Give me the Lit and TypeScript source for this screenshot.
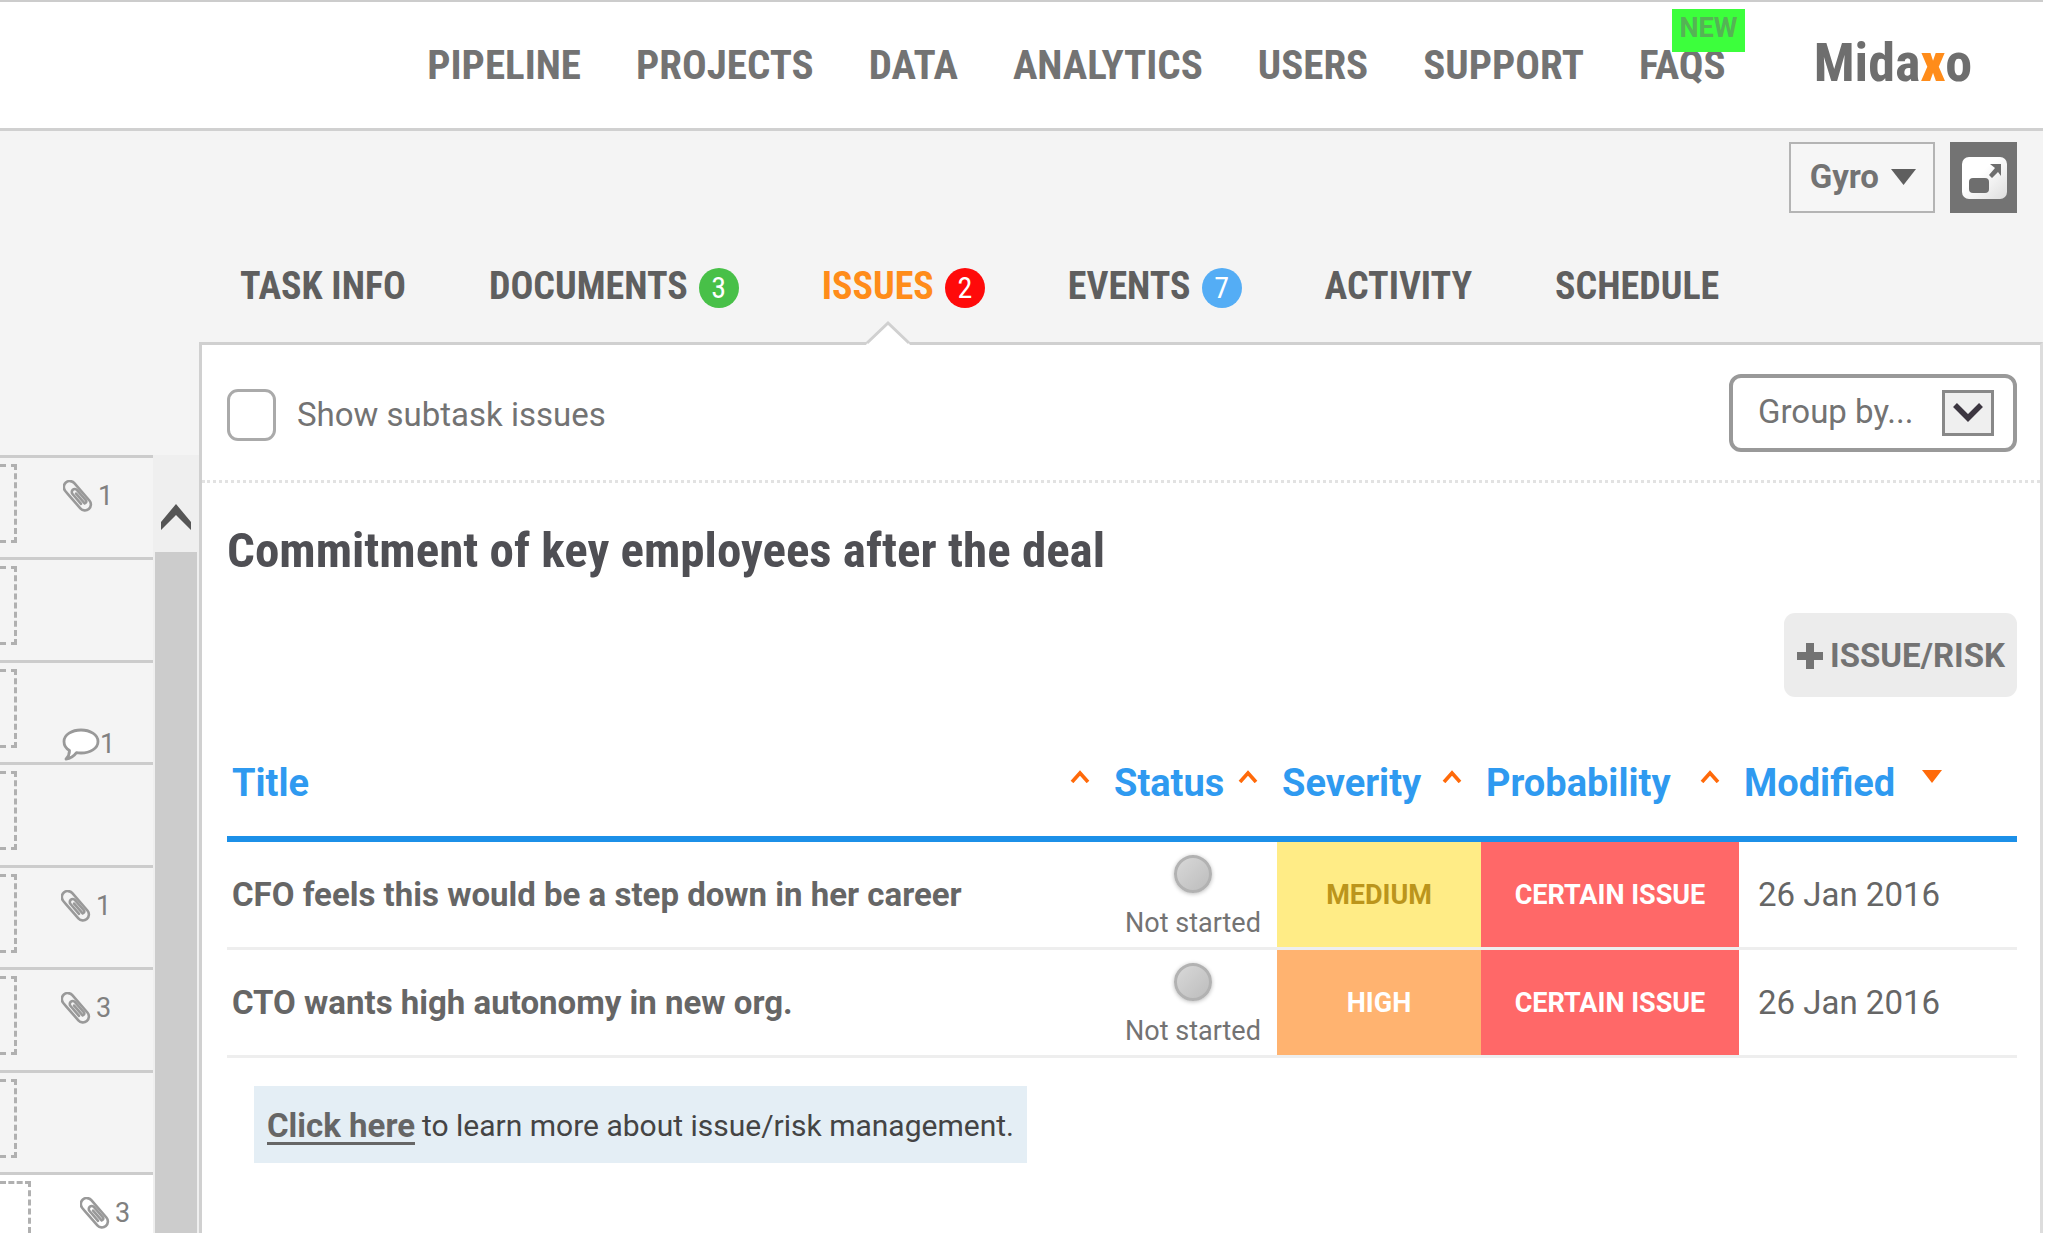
import { LitElement, html, css, nothing } from 'lit';
import { customElement } from 'lit/decorators.js';
import { classMap } from 'lit/directives/class-map.js';

interface Tab { label: string; count?: number; tone?: string; active?: boolean; }
interface TaskRow { icon?: 'clip' | 'comment'; count?: number; shift?: boolean; last?: boolean; }
interface Issue { title: string; status: string; severity: string; tone: string; probability: string; modified: string; }

const NAV = ['PIPELINE', 'PROJECTS', 'DATA', 'ANALYTICS', 'USERS', 'SUPPORT'];

const TABS: Tab[] = [
  { label: 'TASK INFO' },
  { label: 'DOCUMENTS', count: 3, tone: 'green' },
  { label: 'ISSUES', count: 2, tone: 'red', active: true },
  { label: 'EVENTS', count: 7, tone: 'blue' },
  { label: 'ACTIVITY' },
  { label: 'SCHEDULE' },
];

const TASKS: TaskRow[] = [
  { icon: 'clip', count: 1 },
  {},
  { icon: 'comment', count: 1 },
  {},
  { icon: 'clip', count: 1, shift: true },
  { icon: 'clip', count: 3, shift: true },
  {},
  { icon: 'clip', count: 3, last: true },
];

const ISSUES: Issue[] = [
  { title: 'CFO feels this would be a step down in her career', status: 'Not started', severity: 'MEDIUM', tone: 'medium', probability: 'CERTAIN ISSUE', modified: '26 Jan 2016' },
  { title: 'CTO wants high autonomy in new org.', status: 'Not started', severity: 'HIGH', tone: 'high', probability: 'CERTAIN ISSUE', modified: '26 Jan 2016' },
];

const clip = html`<svg class="clip" viewBox="0 0 30 33" aria-hidden="true">
  <g transform="rotate(-41 15 16.5)" fill="none" stroke="#999" stroke-width="2.6" stroke-linecap="round">
    <path d="M9 9V27a6 6 0 0 0 12 0V4a6 6 0 0 0 -12 0V9"/>
    <path d="M12.500 24V11a3 3 0 0 1 6 0V25a2 2 0 0 1 -3 1V13"/>
  </g></svg>`;

const comment = html`<svg class="comment" viewBox="0 0 38 34" aria-hidden="true">
  <path d="M19 2C28 2 36 6.500 36 13.500S28 25 19 25c-1.500 0-3 0-4.500-.4C12 28 8 30.500 4 31c2-2 3.500-5 3.500-8.500C4 20.500 2 17 2 13.500 2 6.500 10 2 19 2z"
    fill="#fff" stroke="#999" stroke-width="2.800" stroke-linejoin="round"/></svg>`;

const caret = html`<svg class="caret" viewBox="0 0 20 13" aria-hidden="true">
  <path d="M2 12L10 3L18 12" fill="none" stroke="#ff6a0a" stroke-width="3.600"/></svg>`;

const sorted = html`<svg class="caret" viewBox="0 0 20 13" aria-hidden="true">
  <path d="M0 0H20L10 13z" fill="#ff6a0a"/></svg>`;

@customElement('app-root')
export class AppRoot extends LitElement {
  static styles = css`
    :host {
      display: flex; flex-direction: column; min-height: 100vh; box-sizing: border-box;
      padding-right: 5px; background: #fff; color: #666;
      font: 400 33px/40px Roboto, "Liberation Sans", sans-serif;
    }
    * { box-sizing: border-box; }
    a { color: inherit; text-decoration: none; }
    button, select { font: inherit; color: inherit; margin: 0; cursor: pointer; }
    svg { display: block; flex: none; }
    .cond { font-family: "Roboto Condensed", Roboto, sans-serif; font-weight: 700; }

    .top {
      display: flex; align-items: center; justify-content: flex-end; height: 131px;
      padding-right: 71px; border-top: 2px solid #ccc; border-bottom: 3px solid #d0d0d0;
    }
    .menu { display: flex; gap: 55px; font-size: 41px; line-height: 50px; color: #737373; }
    .faqs { position: relative; }
    .new {
      position: absolute; left: 33px; top: -31px; width: 73px; height: 43px;
      background: #3cff3c; color: #55b355; text-align: center;
      font: 700 27px/38px Roboto, sans-serif;
    }
    .logo { margin: 0 0 4px 88px; font-size: 54px; line-height: 64px; color: #6e6e6e; }
    .logo b { color: #ff8c1a; }

    .body { flex: 1; display: flex; background: #f4f4f4; }
    .side { flex: none; width: 199px; display: flex; padding-top: 324px; }
    .tasks { flex: none; width: 153px; display: flex; flex-direction: column; list-style: none; margin: 0; padding: 0; }
    .task {
      display: flex; align-items: flex-start; height: 102px; border-top: 3px solid #ccc; padding-top: 6px;
      font-size: 27px; line-height: 32px; color: #808080;
    }
    .task:nth-child(even) { height: 103px; }
    .slot { flex: none; width: 17px; height: 79px; border: 3px dashed #b0b0b0; border-left: 0; }
    .mark { display: flex; gap: 5px; padding: 16px 0 0 46px; }
    .shift .mark { padding-left: 44px; }
    .mark.talk { gap: 0; padding: 59px 0 0 45px; }
    .task.last { flex: 1; height: auto; background: #fff; }
    .last .slot { width: 31px; height: auto; align-self: stretch; border-bottom: 0; }
    .last .mark { padding-left: 49px; }
    .clip { width: 30px; height: 33px; }
    .comment { width: 38px; height: 34px; }
    .scroll { flex: 1; display: flex; flex-direction: column; background: #efefef; padding: 0 2px; }
    .up { height: 97px; padding: 26px 0 0 5px; border: 0; background: none; }
    .thumb { flex: 1; background: #ccc; }

    .main { flex: 1; min-width: 0; display: flex; flex-direction: column; }
    .tools { display: flex; justify-content: flex-end; gap: 15px; padding: 11px 26px 0 0; }
    .user {
      display: flex; align-items: center; gap: 12px; height: 71px; padding: 0 17px 2px 19px;
      border: 2px solid #b4b4b4; background: #f6f6f6; font-weight: 700; color: #737373;
    }
    .expand { width: 67px; height: 71px; padding: 0 0 0 12px; border: 0; background: #737373; }
    .tabs { display: flex; gap: 83px; padding: 51px 0 0 41px; font-size: 38px; line-height: 44px; color: #5f5f5f; }
    .tab { position: relative; display: flex; gap: 11px; padding-bottom: 34px; }
    .active { color: #ff8c1a; }
    .notch { position: absolute; left: 44px; bottom: -3px; }
    .count {
      width: 40px; height: 40px; margin-top: 4px; border-radius: 50%; color: #fff; text-align: center;
      font-size: 30px; line-height: 40px; font-weight: 400;
    }
    .green { background: #48c048; }
    .red { background: #ff0a0a; }
    .blue { background: #54adf5; }

    .panel { flex: 1; background: #fff; border: 3px solid #d0d0d0; border-bottom: 0; border-right-color: #ddd; }
    .filter {
      display: flex; align-items: center; justify-content: space-between; height: 138px;
      padding: 0 23px 0 25px; border-bottom: 3px dotted #e2e2e2;
    }
    .check { display: flex; align-items: center; gap: 21px; padding-top: 4px; color: #737373; }
    .check input {
      appearance: none; width: 49px; height: 52px; margin: 0; border: 3px solid #aaa; border-radius: 11px; background: #fff;
    }
    .group { position: relative; }
    .group select {
      appearance: none; display: block; width: 288px; height: 78px; padding: 0 80px 2px 25px;
      border: 4px solid #999; border-radius: 12px; background: #fff; color: #737373;
    }
    .drop { position: absolute; right: 23px; top: 16px; pointer-events: none; }
    .content { padding: 40px 23px 0 25px; }
    h1 { margin: 0; font-size: 49px; line-height: 56px; color: #4f4f54; }
    .actions { display: flex; justify-content: flex-end; padding-top: 34px; }
    .add {
      display: flex; align-items: center; gap: 6px; height: 84px; padding: 2px 12px 0; border: 0; border-radius: 11px;
      background: #ececec; color: #737373; font-weight: 700;
    }

    table { width: 100%; margin-top: 64px; border-collapse: separate; border-spacing: 0; table-layout: fixed; }
    .c-status { width: 168px; }
    .c-sev { width: 204px; }
    .c-prob { width: 258px; }
    .c-mod { width: 278px; }
    th { padding: 0; border-bottom: 6px solid #1c90e8; font-size: 38px; line-height: 44px; font-weight: 700; color: #2f9af0; text-align: left; }
    .sort {
      display: flex; justify-content: space-between; align-items: flex-start; width: 100%;
      padding: 0 19px 31px 5px; border: 0; background: none; text-align: left; line-height: 44px;
    }
    .c-mod .sort { padding-right: 75px; }
    .caret { width: 20px; height: 13px; margin-top: 9px; }
    td { height: 108px; padding: 0; border-bottom: 3px solid #eee; }
    .name { padding-left: 5px; font-weight: 700; }
    .state { text-align: center; font-size: 27px; line-height: 30px; color: #737373; padding-top: 4px; }
    .dot {
      display: block; width: 38px; height: 38px; margin: 0 auto 15px; border-radius: 50%;
      border: 3px solid #b2b2b2; background: linear-gradient(135deg, #d8d8d8, #bdbdbd); box-shadow: 0 1px 4px #bbb;
    }
    .tag { text-align: center; font-size: 27px; font-weight: 700; color: #fff; background-clip: padding-box; }
    .medium { background-color: #ffec86; color: #bb951c; }
    .high { background-color: #ffb370; }
    .certain { background-color: #ff6868; }
    .date { padding-left: 19px; }
    .hint {
      display: flex; align-items: center; gap: 7px; width: fit-content; height: 77px; margin: 28px 0 0 27px; padding: 2px 13px 0;
      background: #e4eef5; color: #444; font-size: 30px;
    }
    .hint a { font-size: 33px; font-weight: 700; color: #666; text-decoration: underline 3px; text-underline-offset: 5px; }
  `;

  private task(t: TaskRow) {
    const mark = t.icon
      ? html`<span class=${classMap({ mark: true, talk: t.icon === 'comment' })}>${t.icon === 'clip' ? clip : comment}<span>${t.count}</span></span>`
      : nothing;
    return html`<li class=${classMap({ task: true, shift: !!t.shift, last: !!t.last })}><span class="slot"></span>${mark}</li>`;
  }

  private tab(t: Tab) {
    return html`<a href="#" class=${classMap({ tab: true, active: !!t.active })}>
      <span>${t.label}</span>${t.count ? html`<span class="count ${t.tone}">${t.count}</span>` : nothing}
      ${t.active ? html`<svg class="notch" width="44" height="25" viewBox="0 0 44 25" aria-hidden="true">
        <path d="M0 25L2 22L22 2L42 22L44 25z" fill="#fff"/>
        <path d="M1 23L22 3L43 23" fill="none" stroke="#d0d0d0" stroke-width="3"/></svg>` : nothing}</a>`;
  }

  private head(label: string, cls: string, icon = caret) {
    return html`<th scope="col" class=${cls}><button class="sort"><span>${label}</span>${icon}</button></th>`;
  }

  render() {
    return html`
      <header class="top">
        <nav class="menu cond">
          ${NAV.map((n) => html`<a href="#">${n}</a>`)}
          <a href="#" class="faqs">FAQS<span class="new">NEW</span></a>
        </nav>
        <a href="#" class="logo cond">Mida<b>x</b>o</a>
      </header>
      <div class="body">
        <aside class="side">
          <ul class="tasks">${TASKS.map((t) => this.task(t))}</ul>
          <div class="scroll">
            <button class="up" aria-label="Scroll up">
              <svg width="32" height="28" viewBox="0 0 32 28"><path d="M1 19L16 1L31 19V27L16 12L1 27z" fill="#555"/></svg>
            </button>
            <div class="thumb"></div>
          </div>
        </aside>
        <main class="main">
          <div class="tools">
            <button class="user">Gyro<svg width="25" height="16" viewBox="0 0 25 16"><path d="M0 0H25L12.500 16z" fill="#5f5f5f"/></svg></button>
            <button class="expand" aria-label="Expand">
              <svg width="45" height="42" viewBox="0 0 45 42">
                <defs><linearGradient id="g" x1="0" y1="0" x2="1" y2="1"><stop offset=".4" stop-color="#fff"/><stop offset="1" stop-color="#ddd"/></linearGradient></defs>
                <rect width="45" height="42" rx="7" fill="url(#g)"/>
                <rect x="7" y="21" width="20" height="15" rx="4" fill="#6e6e6e"/>
                <path d="M28 7H39V19L36 15L30 21L27 18L33 11z" fill="#6e6e6e"/>
              </svg>
            </button>
          </div>
          <nav class="tabs cond">${TABS.map((t) => this.tab(t))}</nav>
          <section class="panel">
            <div class="filter">
              <label class="check"><input type="checkbox">Show subtask issues</label>
              <div class="group">
                <select aria-label="Group by"><option>Group by...</option></select>
                <svg class="drop" width="52" height="46" viewBox="0 0 52 46" aria-hidden="true">
                  <rect x="1.500" y="1.500" width="49" height="43" fill="#efefef" stroke="#888" stroke-width="3"/>
                  <path d="M13 15L26 28L39 15" fill="none" stroke="#3c3640" stroke-width="5.500"/></svg>
              </div>
            </div>
            <div class="content">
              <h1 class="cond">Commitment of key employees after the deal</h1>
              <div class="actions">
                <button class="add"><svg width="28" height="28" viewBox="0 0 28 28"><path d="M10 1H18V10H27V18H18V27H10V18H1V10H10z" fill="#737373"/></svg>ISSUE/RISK</button>
              </div>
              <table>
                <thead><tr>
                  ${this.head('Title', 'c-title')}${this.head('Status', 'c-status')}${this.head('Severity', 'c-sev')}
                  ${this.head('Probability', 'c-prob')}${this.head('Modified', 'c-mod', sorted)}
                </tr></thead>
                <tbody>${ISSUES.map((i) => html`<tr>
                  <td class="name">${i.title}</td>
                  <td class="state"><span class="dot"></span>${i.status}</td>
                  <td class="tag ${i.tone}">${i.severity}</td>
                  <td class="tag certain">${i.probability}</td>
                  <td class="date">${i.modified}</td></tr>`)}</tbody>
              </table>
              <p class="hint"><a href="#">Click here</a><span>to learn more about issue/risk management.</span></p>
            </div>
          </section>
        </main>
      </div>`;
  }
}
